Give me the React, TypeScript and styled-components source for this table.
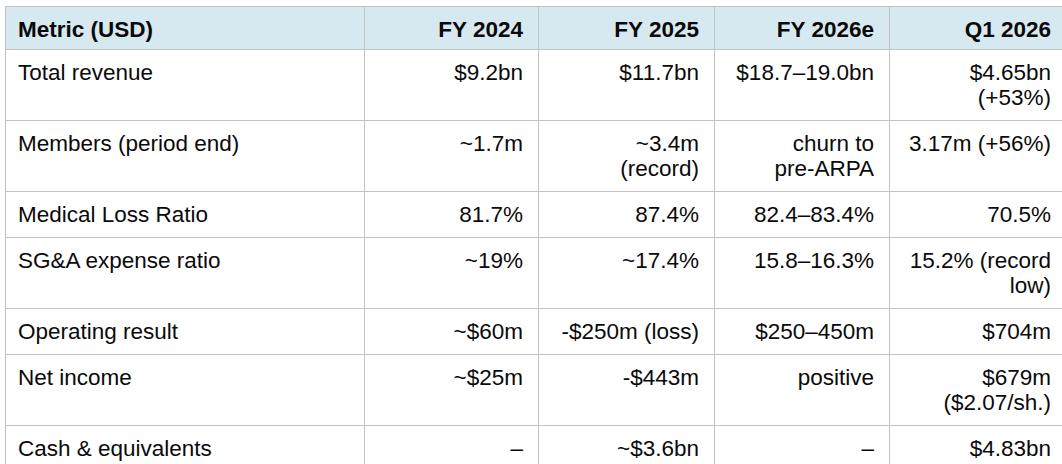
import styled, { createGlobalStyle } from "styled-components";

const GlobalStyle = createGlobalStyle`
  html, body {
    margin: 0;
    padding: 0;
    overflow: hidden;
    background: #ffffff;
  }
  body {
    font-family: "Liberation Sans", Arial, Helvetica, sans-serif;
    color: #0a0a0a;
  }
`;

type Row = {
  metric: string;
  values: string[][];
};

const columns = ["FY 2024", "FY 2025", "FY 2026e", "Q1 2026"];
const widths = [359, 174, 176, 175, 200];

const rows: Row[] = [
  {
    metric: "Total revenue",
    values: [["$9.2bn"], ["$11.7bn"], ["$18.7–19.0bn"], ["$4.65bn", "(+53%)"]],
  },
  {
    metric: "Members (period end)",
    values: [["~1.7m"], ["~3.4m", "(record)"], ["churn to", "pre-ARPA"], ["3.17m (+56%)"]],
  },
  {
    metric: "Medical Loss Ratio",
    values: [["81.7%"], ["87.4%"], ["82.4–83.4%"], ["70.5%"]],
  },
  {
    metric: "SG&A expense ratio",
    values: [["~19%"], ["~17.4%"], ["15.8–16.3%"], ["15.2% (record", "low)"]],
  },
  {
    metric: "Operating result",
    values: [["~$60m"], ["-$250m (loss)"], ["$250–450m"], ["$704m"]],
  },
  {
    metric: "Net income",
    values: [["~$25m"], ["-$443m"], ["positive"], ["$679m", "($2.07/sh.)"]],
  },
  {
    metric: "Cash & equivalents",
    values: [["–"], ["~$3.6bn"], ["–"], ["$4.83bn"]],
  },
];

export default function App() {
  return (
    <Page>
      <GlobalStyle />
      <Table>
        <colgroup>
          {widths.map((w, i) => (
            <col key={i} style={{ width: w }} />
          ))}
        </colgroup>
        <thead>
          <tr>
            <HeadCell $align="left">Metric (USD)</HeadCell>
            {columns.map((c) => (
              <HeadCell key={c} $align="right">
                {c}
              </HeadCell>
            ))}
          </tr>
        </thead>
        <tbody>
          {rows.map((row) => (
            <tr key={row.metric}>
              <Cell $align="left">{row.metric}</Cell>
              {row.values.map((lines, i) => (
                <Cell key={i} $align="right">
                  {lines.map((line, j) => (
                    <Line key={j}>{line}</Line>
                  ))}
                </Cell>
              ))}
            </tr>
          ))}
        </tbody>
      </Table>
    </Page>
  );
}

const Page = styled.div`
  padding: 6px 0 0 5px;
  width: 1100px;
`;

const Table = styled.table`
  border-collapse: collapse;
  table-layout: fixed;
  width: 1084px;
  font-size: 22.5px;
  line-height: 25px;
`;

const HeadCell = styled.th<{ $align: "left" | "right" }>`
  text-align: ${(p) => p.$align};
  font-weight: 700;
  background: #d7e9f0;
  border: 1px solid #c2c2c2;
  padding: 10px 15px 7px 12px;
  vertical-align: top;
  white-space: nowrap;

  &:last-child {
    padding-right: 38px;
  }
`;

const Cell = styled.td<{ $align: "left" | "right" }>`
  text-align: ${(p) => p.$align};
  border: 1px solid #c2c2c2;
  padding: 10px 15px 10px 12px;
  vertical-align: top;

  &:last-child {
    padding-right: 38px;
  }
`;

const Line = styled.div`
  white-space: nowrap;
`;
